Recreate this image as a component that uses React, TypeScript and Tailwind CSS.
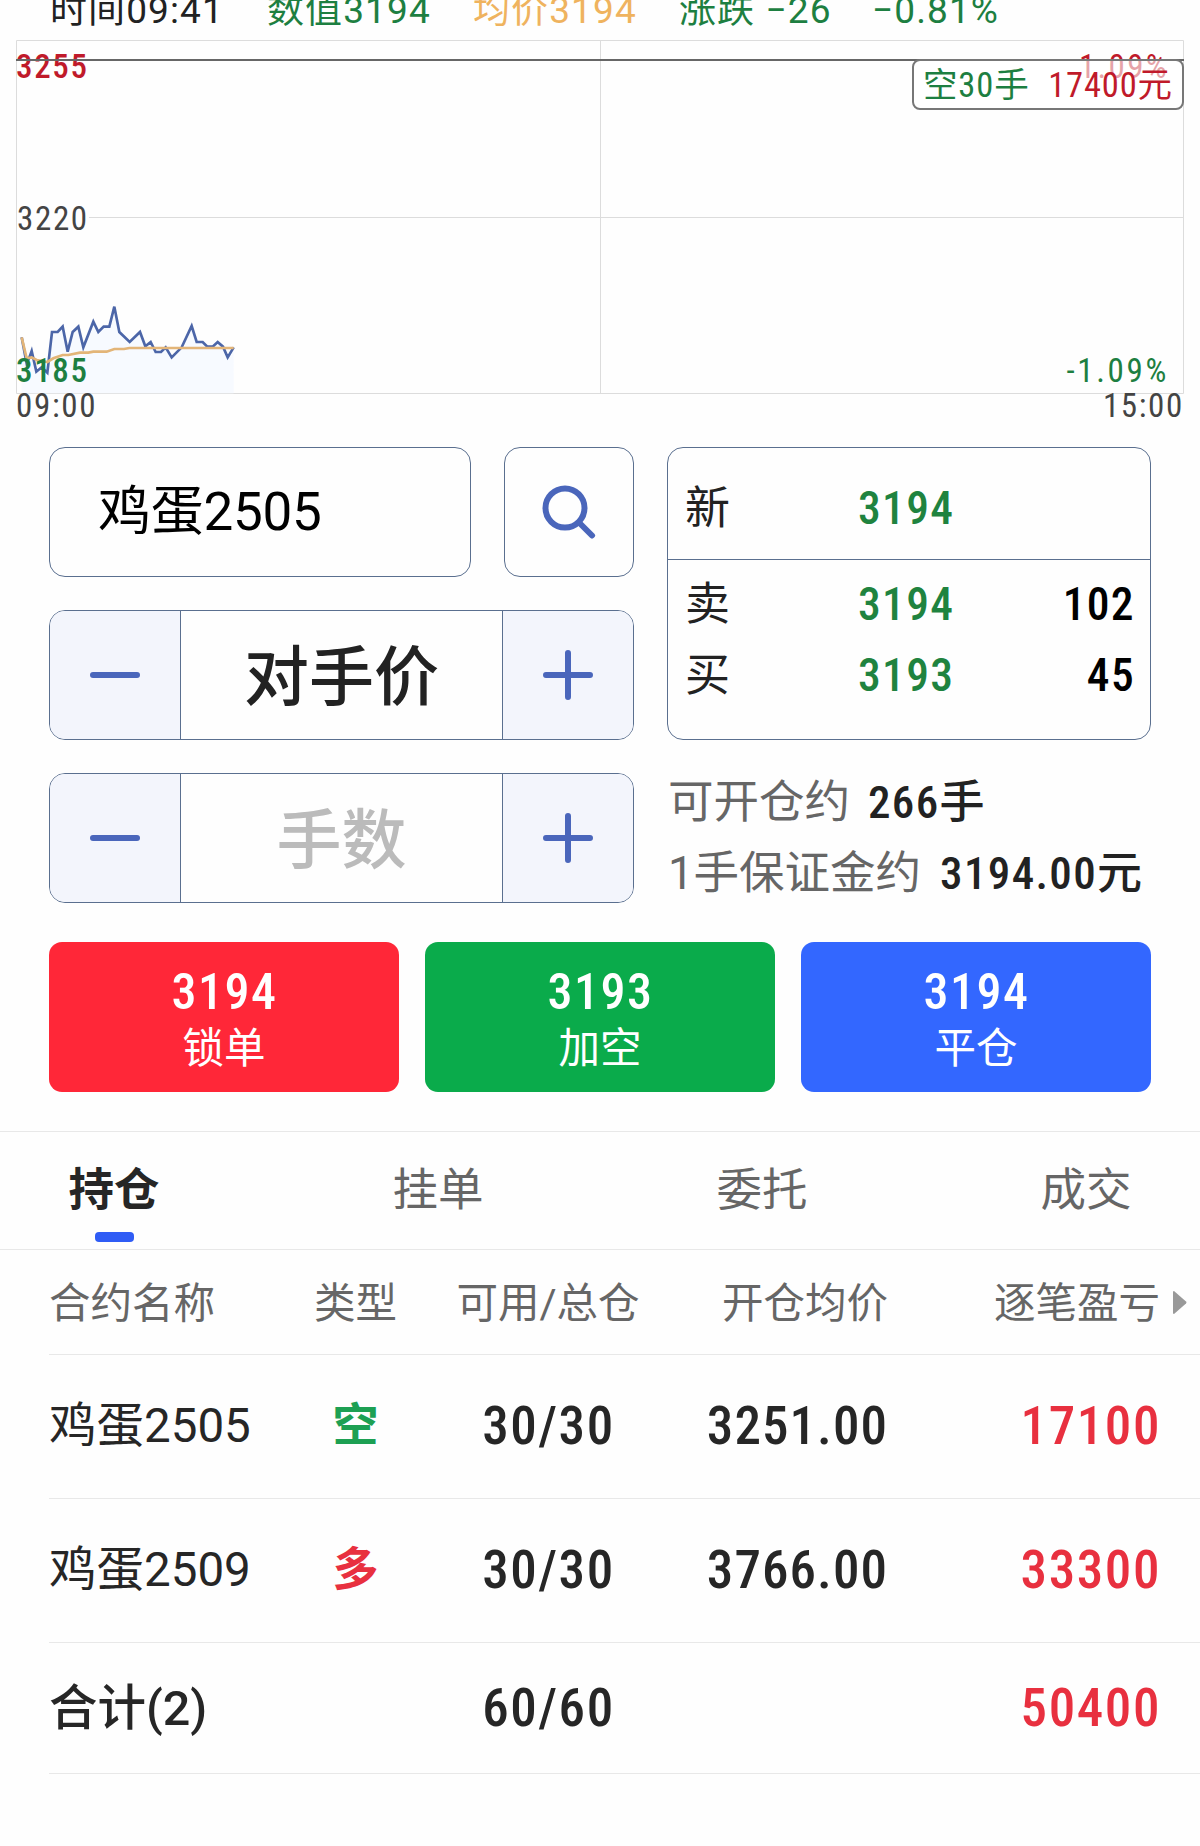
import { useState } from 'react'

const FONT = 'font-[Roboto,"Noto_Sans_CJK_SC",sans-serif]'

// Narrow, slightly spaced figures used for every price and amount
const NUM = 'font-stretch-75% tracking-[0.03em]'

const TABS = ['持仓', '挂单', '委托', '成交'] as const

const ACTIONS = [
  { price: '3194', label: '锁单', color: 'bg-[#ff2738]' },
  { price: '3193', label: '加空', color: 'bg-[#0aab4b]' },
  { price: '3194', label: '平仓', color: 'bg-[#3367ff]' },
]

const POSITIONS = [
  { name: '鸡蛋2505', side: '空', sideColor: 'text-[#1da053]', volume: '30/30', price: '3251.00', profit: '17100' },
  { name: '鸡蛋2509', side: '多', sideColor: 'text-[#e8303f]', volume: '30/30', price: '3766.00', profit: '33300' },
]

// Intraday series, in thirds of a pixel from the left edge of the chart
const PRICE_LINE =
  '65,172 80,250 87,235 95,213 109,275 125,262 142,278 156,156 173,156 188,140 203,215 218,156 235,140 250,202 280,125 295,156 311,140 328,140 343,80 358,156 389,186 420,156 436,199 452,186 467,216 483,216 497,202 515,232 545,202 575,138 590,186 608,186 622,200 638,200 653,186 669,200 683,232 701,202'
const AVG_LINE =
  '65,172 80,235 95,232 110,240 142,246 160,235 188,225 205,225 240,218 265,218 280,215 320,215 343,207 372,207 388,204 701,204'

function Quote() {
  return (
    <div className="flex h-5 items-center text-[37px] leading-none tracking-[0.03em] whitespace-nowrap text-[#222]">
      <span className="ml-[50px] w-[217px]">时间09:41</span>
      <span className="w-[206px] text-[#1d7f41]">数值3194</span>
      <span className="w-[206px] text-[#efb35e]">均价3194</span>
      <span className="w-[193px] text-[#1d7f41]">涨跌 −26</span>
      <span className="text-[#1d7f41]">−0.81%</span>
    </div>
  )
}

function Chart() {
  return (
    <div className="relative h-[427px] text-[33px] leading-none font-stretch-75% tracking-[0.05em]">
      <svg className="block" width="1200" height="427" viewBox="0 20 1200 427" fill="none">
        <path d="M16.5 40.5H1183.5V393.5H16.5ZM600.5 40.5V393.5M16.5 217.5H1183.5" stroke="#dcdcdc" />
        <g transform="translate(0 280) scale(.33333)" strokeWidth="8">
          <polygon points={`65,340 ${PRICE_LINE} 701,340`} fill="#f7faff" />
          <polyline points={PRICE_LINE} stroke="#4c66a8" />
          <polyline points={AVG_LINE} stroke="#e3b578" />
        </g>
      </svg>
      <span className="absolute top-[30px] left-4 font-medium text-[#c01a2a]">3255</span>
      <span className="absolute top-[182px] left-[17px] bg-[#fefefe] text-[#444]">3220</span>
      <span className="absolute top-[334px] left-4 font-medium text-[#1d7f41]">3185</span>
      <span className="absolute top-[369px] left-4 text-[#444]">09:00</span>
      <span className="absolute top-[30px] right-[31px] tracking-[0.07em] text-[#c01a2a]">1.09%</span>
      <span className="absolute top-[334px] right-[31px] tracking-[0.08em] text-[#1d7f41]">-1.09%</span>
      <span className="absolute top-[369px] right-4 text-[#444]">15:00</span>
      <div className="absolute top-[39px] right-4 left-4 h-0.5 bg-[#666]" />
      <div className="absolute top-[39px] right-4 flex h-[51px] w-[272px] items-center justify-between rounded-lg border-2 border-[#777] bg-white/60 px-[9px] pt-0.5 text-[34.5px] tracking-[0.025em] whitespace-nowrap">
        <span className="text-[#1d7f41]">空30手</span>
        <span className="text-[#c01a2a]">17400元</span>
      </div>
    </div>
  )
}

function Minus() {
  return (
    <svg width="50" height="50" viewBox="0 0 50 50" stroke="#4a66bb" strokeWidth="6" strokeLinecap="round">
      <path d="M3 25H47" />
    </svg>
  )
}

function Plus() {
  return (
    <svg width="50" height="50" viewBox="0 0 50 50" stroke="#4a66bb" strokeWidth="6" strokeLinecap="round">
      <path d="M3 25H47M25 3V47" />
    </svg>
  )
}

function Stepper({ text, className }: { text: string; className: string }) {
  return (
    <div className="flex h-[130px] w-[585px] overflow-hidden rounded-2xl border border-[#5a6f8f]">
      <button className="flex w-[130px] items-center justify-center bg-[#f3f5fc]"><Minus /></button>
      <div className={`flex flex-1 items-center justify-center border-x border-[#5a6f8f] pt-1.5 text-[65px] leading-none font-medium ${className}`}>
        {text}
      </div>
      <button className="flex w-[130px] items-center justify-center bg-[#f3f5fc]"><Plus /></button>
    </div>
  )
}

function OrderForm() {
  return (
    <div className="flex h-[456px] gap-[33px] pl-[49px] leading-none">
      <div className="flex flex-col gap-[33px]">
        <div className="flex gap-[33px]">
          <div className="flex h-[130px] w-[422px] items-center rounded-2xl border border-[#5a6f8f] pl-[48px] text-[53px] tracking-[-0.005em] text-black">
            鸡蛋2505
          </div>
          <button className="flex h-[130px] w-[130px] items-center justify-center rounded-2xl border border-[#5a6f8f]">
            <svg width="54" height="54" viewBox="0 0 54 54" fill="none" stroke="#4a66bb" strokeWidth="6" strokeLinecap="round">
              <circle cx="23" cy="23" r="19.5" />
              <path d="M37.5 38L50 50.5" />
            </svg>
          </button>
        </div>
        <Stepper text="对手价" className="text-[#222]" />
        <Stepper text="手数" className="text-[#bbb]" />
      </div>

      <div className="w-[484px] whitespace-nowrap">
        <div className="h-[293px] rounded-2xl border border-[#5a6f8f] text-[45.5px] text-[#222]">
          <div className="flex h-[112px] items-center border-b border-[#5a6f8f] pr-[15px] pl-[17px] pt-2.5">
            <span className="w-[173px] text-[45px]">新</span>
            <span className={`font-medium text-[#1f833f] ${NUM}`}>3194</span>
          </div>
          <div className="flex h-[71px] items-center pr-[15px] pl-[17px] pt-[18px]">
            <span className="w-[173px] text-[45px]">卖</span>
            <span className={`flex-1 font-medium text-[#1f833f] ${NUM}`}>3194</span>
            <span className={`font-medium text-black ${NUM}`}>102</span>
          </div>
          <div className="flex h-[71px] items-center pr-[15px] pl-[17px] pt-[18px]">
            <span className="w-[173px] text-[45px]">买</span>
            <span className={`flex-1 font-medium text-[#1f833f] ${NUM}`}>3193</span>
            <span className={`font-medium text-black ${NUM}`}>45</span>
          </div>
        </div>
        <div className="mt-[27px] flex h-[71px] items-center pl-px text-[45.5px] text-[#666]">
          可开仓约<span className={`ml-[18px] text-[45px] font-medium text-[#222] ${NUM}`}>266手</span>
        </div>
        <div className="flex h-[71px] items-center pl-px text-[45.5px] text-[#666]">
          1手保证金约<span className={`ml-[19px] text-[45px] font-medium text-[#222] ${NUM}`}>3194.00元</span>
        </div>
      </div>
    </div>
  )
}

export default function App() {
  const [tab, setTab] = useState(0)

  return (
    <div className={`${FONT} h-[1846px] w-[1200px] overflow-hidden bg-[#fefefe]`}>
      <Quote />
      <Chart />
      <OrderForm />

      <div className="mt-[39px] flex gap-[26px] px-[49px]">
        {ACTIONS.map((a) => (
          <button key={a.label} className={`flex h-[150px] flex-1 flex-col items-center rounded-[13px] pt-[25px] leading-none text-white ${a.color}`}>
            <span className={`pl-px text-[50px] font-medium ${NUM}`}>{a.price}</span>
            <span className="mt-[11px] text-[41.5px]">{a.label}</span>
          </button>
        ))}
      </div>

      {/* Tabs */}
      <div className="mt-[39px] flex h-[119px] justify-between border-y border-[#e8e8e8] px-[69px] leading-none">
        {TABS.map((t, i) => (
          <button
            key={t}
            onClick={() => setTab(i)}
            className={`relative flex w-[90px] justify-center pt-[36px] text-[45.5px] whitespace-nowrap ${i === tab ? 'font-bold text-[#262626]' : 'text-[#666]'}`}
          >
            {t}
            {i === tab && <span className="absolute bottom-[7px] h-[10px] w-[39px] rounded-[4px] bg-[#2f5cf5]" />}
          </button>
        ))}
      </div>

      {/* Positions */}
      <div className="ml-[49px] leading-none whitespace-nowrap text-[#262626]">
        <div className="flex h-[105px] items-center border-b border-[#e8e8e8] pt-1 text-[41.5px] text-[#666]">
          <span className="w-[251px]">合约名称</span>
          <span className="w-[111px] text-center">类型</span>
          <span className="w-[274px] text-center">可用/总仓</span>
          <span className="w-[203px] text-right">开仓均价</span>
          <span className="w-[272px] text-right">逐笔盈亏</span>
          <svg className="mb-1 ml-[13px]" width="14" height="23" viewBox="0 0 14 23" fill="#999">
            <path d="M0 1Q0 0 1 0L13 10.5Q14 11.5 13 12.5L1 23Q0 23 0 22Z" />
          </svg>
        </div>
        {POSITIONS.map((p) => (
          <div key={p.name} className="flex h-[144px] items-center border-b border-[#e8e8e8] text-[53px] font-medium">
            <span className="w-[251px] text-[47.5px] font-normal">{p.name}</span>
            <span className={`w-[111px] pb-1 text-center text-[46px] font-bold ${p.sideColor}`}>{p.side}</span>
            <span className={`w-[275px] text-center ${NUM}`}>{p.volume}</span>
            <span className="w-[202px] text-right font-stretch-75% tracking-[0.02em]">{p.price}</span>
            <span className={`w-[273px] text-right text-[#e8303f] ${NUM}`}>{p.profit}</span>
          </div>
        ))}
        <div className="flex h-[131px] items-center border-b border-[#e8e8e8] text-[53px] font-medium">
          <span className="w-[362px] pt-0.5 text-[48.5px]">合计(2)</span>
          <span className={`w-[275px] text-center ${NUM}`}>60/60</span>
          <span className={`w-[475px] text-right text-[#e8303f] ${NUM}`}>50400</span>
        </div>
      </div>
    </div>
  )
}
